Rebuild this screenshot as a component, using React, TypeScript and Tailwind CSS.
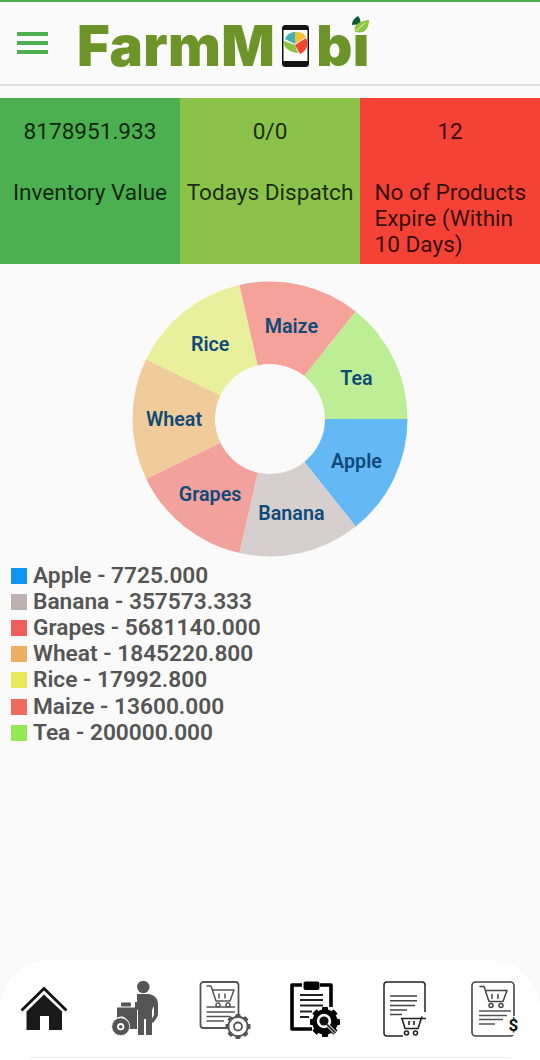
import React from "react";

const slices = [
  { name: "Apple", value: "7725.000", pie: "#64B9F4", key: "#0F96F0" },
  { name: "Banana", value: "357573.333", pie: "#D6CFCF", key: "#BDB0B0" },
  { name: "Grapes", value: "5681140.000", pie: "#F3A19C", key: "#EE5F5B" },
  { name: "Wheat", value: "1845220.800", pie: "#F0CC9A", key: "#ECAE62" },
  { name: "Rice", value: "17992.800", pie: "#E8F09C", key: "#E3E95B" },
  { name: "Maize", value: "13600.000", pie: "#F4A29A", key: "#EE6B5E" },
  { name: "Tea", value: "200000.000", pie: "#BDEE96", key: "#94E854" },
];

const cx = 140, cy = 155, R = 137.5, r = 55;
const pt = (rad: number, deg: number) => {
  const a = (deg * Math.PI) / 180;
  return `${(cx + rad * Math.cos(a)).toFixed(2)} ${(cy + rad * Math.sin(a)).toFixed(2)}`;
};

function Pie() {
  const step = 360 / 7;
  return (
    <svg width="280" height="299" viewBox="0 0 280 299">
      {slices.map((s, i) => {
        const a0 = i * step, a1 = (i + 1) * step, m = a0 + step / 2;
        const a = (m * Math.PI) / 180;
        return (
          <g key={s.name}>
            <path d={`M${pt(R, a0)} A${R} ${R} 0 0 1 ${pt(R, a1)} L${pt(r, a1)} A${r} ${r} 0 0 0 ${pt(r, a0)} Z`} fill={s.pie} />
            <text
              x={cx + 96 * Math.cos(a)}
              y={cy + 96 * Math.sin(a) + 7.4}
              textAnchor="middle"
              fill="#0F4A78"
              fontSize="19.7"
              fontWeight="600"
              fontFamily="Roboto, sans-serif"
            >
              {s.name}
            </text>
          </g>
        );
      })}
    </svg>
  );
}

function Gear({ x, y, o, fill, stroke, sw = 2 }: { x: number; y: number; o: number; fill: string; stroke: string; sw?: number }) {
  const teeth = Array.from({ length: 8 }, (_, i) => i * 45);
  return (
    <g transform={`translate(${x} ${y})`}>
      <circle r={o * 0.78} fill={fill} stroke={stroke} strokeWidth={sw} />
      {teeth.map((t) => (
        <rect key={t} x={-o * 0.2} y={-o} width={o * 0.4} height={o * 0.3} rx="0.8" fill={stroke} transform={`rotate(${t})`} />
      ))}
    </g>
  );
}

const Cart = ({ c = "#444", w = 1.8 }: { c?: string; w?: number }) => (
  <g fill="none" stroke={c} strokeWidth={w} strokeLinecap="round" strokeLinejoin="round">
    <path d="M0 0h4l5 15h14l4-11H5.5" />
    <path d="M12 8v4M18 8v4" />
    <circle cx="11" cy="19" r="2" />
    <circle cx="21" cy="19" r="2" />
  </g>
);

const svgProps = { width: 90, height: 60, viewBox: "0 0 90 60" };

const HomeIcon = () => (
  <svg {...svgProps}>
    <path d="M21.5 30.5 44 8.5l22.5 22" fill="none" stroke="#111" strokeWidth="2.8" />
    <path d="M44 14.5 62 31.5V50H49V36h-9v14H26.5V31.5Z" fill="#1a1a1a" />
  </svg>
);

const FarmerIcon = () => (
  <svg {...svgProps}>
    <g fill="#555">
      <circle cx="53.3" cy="7" r="6.2" />
      <path d="M47 14h12c5 1 9 4 9 10v10c0 3-3 6-5 9l-2.5-2c1-3 3.5-4 3.5-7V26l-2 4v25h-6V39h-2v16h-6V30h-3V22h2Z" />
      <rect x="31" y="22.5" width="10" height="4" rx="1" />
      <path d="M27 27.5h20V49H38a8 8 0 0 0-11-11Z" />
    </g>
    <circle cx="30.7" cy="46.7" r="9" fill="#555" stroke="#fff" strokeWidth="0.8" />
    <circle cx="30.7" cy="46.7" r="3.6" fill="#fff" />
    <circle cx="30.7" cy="46.7" r="1.8" fill="#555" />
  </svg>
);

const DocGearIcon = () => (
  <svg {...svgProps}>
    <rect x="20.5" y="2" width="38" height="46" rx="3" fill="#fff" stroke="#555" strokeWidth="1.8" />
    <g transform="translate(27 6)"><Cart c="#555" w="1.5" /></g>
    <path d="M26.5 27H55M26.5 32H55M26.5 36.5H50M26.5 41H44" stroke="#555" strokeWidth="1.6" />
    <Gear x={58} y={46.5} o={12.5} fill="#fff" stroke="#555" sw={1.8} />
    <circle cx="58" cy="46.5" r="4" fill="#fff" stroke="#555" strokeWidth="1.8" />
  </svg>
);

const ClipboardIcon = () => (
  <svg {...svgProps}>
    <path d="M32 5H22v44h20M50 5h11v22" fill="none" stroke="#000" strokeWidth="3.6" strokeLinejoin="round" />
    <rect x="33.5" y="1.5" width="16" height="8.5" rx="2" fill="#000" />
    <path d="M30 15h23M30 20h23M30 25.5h23M30 31.5h12M30 37h9" stroke="#222" strokeWidth="2.2" />
    <Gear x={55} y={42} o={15} fill="#000" stroke="#000" />
    <circle cx="54" cy="41" r="7.2" fill="#fff" />
    <circle cx="54" cy="41" r="4.6" fill="#111" />
    <path d="M57 44.5l8.5 8.5" stroke="#fff" strokeWidth="3.4" />
    <path d="M57 44.5l8.5 8.5" stroke="#333" strokeWidth="2" />
  </svg>
);

const DocCartIcon = () => (
  <svg {...svgProps}>
    <path d="M43 56H27a3 3 0 0 1-3-3V5a3 3 0 0 1 3-3h35a3 3 0 0 1 3 3v27" fill="none" stroke="#222" strokeWidth="1.5" />
    <path d="M30 16h27M30 20.7h27M30 25.5h25M30 30h17M30 34.5h12" stroke="#444" strokeWidth="1.4" />
    <g fill="none" stroke="#222" strokeWidth="1.6">
      <path d="M41 38.5H66M42 38.5l3 10h13l4-12" />
      <path d="M49 41v4M54 41v4" />
      <circle cx="46.5" cy="53" r="2" />
      <circle cx="55.5" cy="53" r="2" />
    </g>
  </svg>
);

const DocDollarIcon = () => (
  <svg {...svgProps}>
    <rect x="22" y="2" width="42" height="54" rx="3.5" fill="#fff" stroke="#444" strokeWidth="1.6" />
    <g transform="translate(30 6.5)"><Cart c="#444" w="1.5" /></g>
    <path d="M29 31H61M29 35.5H57M29 39.5H53M29 44H45" stroke="#555" strokeWidth="1.6" />
    <rect x="57" y="36" width="12" height="19" fill="#fff" />
    <text x="63.5" y="51" textAnchor="middle" fontSize="17" fontWeight="700" fontFamily="Roboto, sans-serif" fill="#111">$</text>
  </svg>
);

const icons = [HomeIcon, FarmerIcon, DocGearIcon, ClipboardIcon, DocCartIcon, DocDollarIcon];

const PhoneLogo = () => (
  <svg width="29" height="44" viewBox="0 0 29 44" className="mx-[6px] shrink-0">
    <rect x="1" y="1" width="27" height="42" rx="3.5" fill="#141414" />
    <rect x="2.5" y="6" width="24" height="31" fill="#fafafa" />
    <path d="M14 20 4 15c2-5 6-7 10-7Z" fill="#3FB4B8" />
    <path d="M14 20V8c5 0 9 1 11 5Z" fill="#F2C230" />
    <path d="M14 21l11-7c3 6 1 13-6 16Z" fill="#F2482E" />
    <path d="M14 21 3 17c-1 5 3 11 14 12Z" fill="#8CC43F" />
  </svg>
);

const Leaf = () => (
  <svg width="20" height="20" viewBox="0 0 20 20" className="absolute top-0 left-[273px]">
    <path d="M2 9C2 4 5 2 8 0c2 2 3 5 2 8Z" fill="#0E5A36" />
    <path d="M5 16C3 8 10 5 19 4c0 8-4 14-14 12Z" fill="#8DC63F" />
    <path d="M6 15 15 7" stroke="#fff" strokeWidth="0.8" />
  </svg>
);

export default function App() {
  return (
    <div className="flex h-[1060px] w-[540px] flex-col overflow-hidden bg-[#fafafa] font-['Roboto',sans-serif]">
      <header className="flex h-[86px] shrink-0 items-center border-t-2 border-b-2 border-t-[#4CAF50] border-b-[#dedede] pl-[17px]">
        <div className="flex w-[31px] flex-col gap-[5.5px]">
          <span className="h-[3.5px] bg-[#4CAF50]" />
          <span className="h-[3.5px] bg-[#4CAF50]" />
          <span className="h-[3.5px] bg-[#4CAF50]" />
        </div>
        <div className="relative mt-[5px] ml-[29px] flex items-center font-['Inter',sans-serif] text-[56px] leading-[60px] font-black tracking-[0.4px] text-[#6C9428]">
          <span>FarmM</span>
          <PhoneLogo />
          <span>bi</span>
          <Leaf />
        </div>
      </header>

      <section className="mt-3 grid h-[166px] shrink-0 grid-cols-3 text-[22.6px] leading-[26px] text-black/80">
        <div className="flex flex-col items-center bg-[#4CAF50] pt-[21px] text-center">
          <div>8178951.933</div>
          <div className="mt-[35px] whitespace-nowrap">Inventory Value</div>
        </div>
        <div className="flex flex-col items-center bg-[#8BC34A] pt-[21px] text-center">
          <div>0/0</div>
          <div className="mt-[35px] whitespace-nowrap">Todays Dispatch</div>
        </div>
        <div className="flex flex-col bg-[#F44336] pt-[21px]">
          <div className="text-center">12</div>
          <div className="mt-[35px] pl-[14.5px]">
            No of Products
            <br />
            Expire (Within
            <br />
            10 Days)
          </div>
        </div>
      </section>

      <section className="flex shrink-0 justify-center">
        <Pie />
      </section>

      <ul className="flex shrink-0 flex-col pl-[11px] text-[22.7px] leading-[26px] font-semibold text-[#555]">
        {slices.map((s) => (
          <li key={s.name} className="flex h-[26.1px] items-center gap-[6px]">
            <span className="h-4 w-4 shrink-0" style={{ background: s.key }} />
            <span>
              {s.name} - {s.value}
            </span>
          </li>
        ))}
      </ul>

      <nav className="mt-auto h-[100px] shrink-0 rounded-t-[50px] bg-white pt-5">
        <div className="grid grid-cols-6">
          {icons.map((Icon, i) => (
            <div key={i} className="flex justify-center">
              <Icon />
            </div>
          ))}
        </div>
        <div className="mx-[30px] mt-[17px] h-px bg-[#eeeeee]" />
      </nav>
    </div>
  );
}
